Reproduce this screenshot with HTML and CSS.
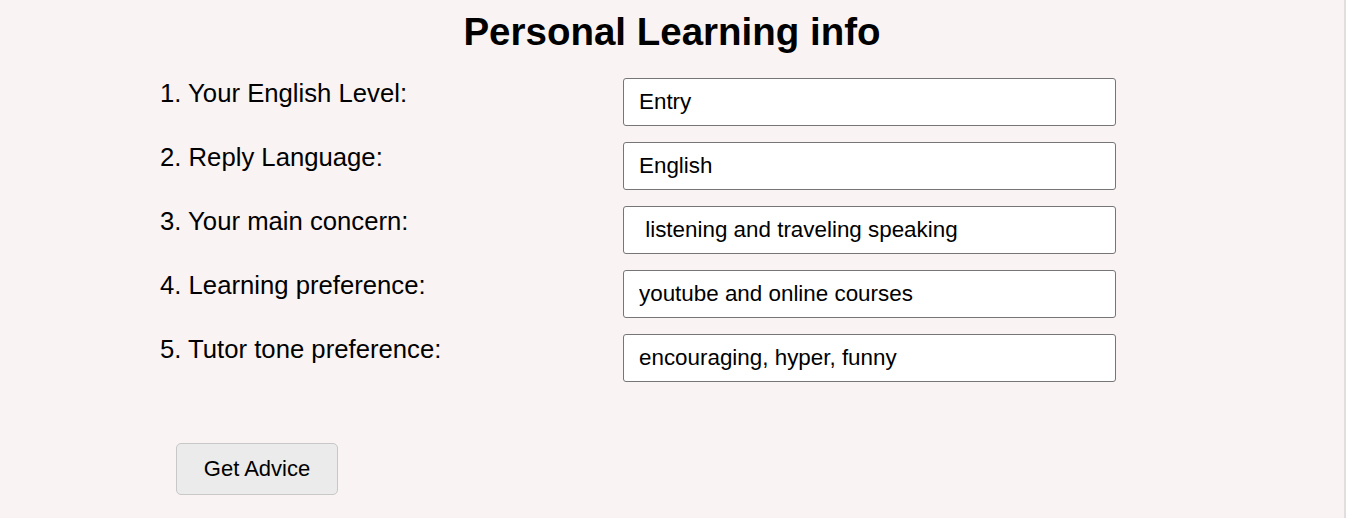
FILE: index.html
```html
<!DOCTYPE html>
<html lang="en">
<head>
<meta charset="utf-8">
<title>Personal Learning info</title>
<link rel="stylesheet" href="styles.css">
</head>
<body>
<div class="page">
  <h1 class="title">Personal Learning info</h1>
  <form class="form">
    <div class="rows">
      <label class="label" for="f1">1. Your English Level:</label>
      <input class="field" id="f1" type="text" value="Entry">
      <label class="label" for="f2">2. Reply Language:</label>
      <input class="field" id="f2" type="text" value="English">
      <label class="label" for="f3">3. Your main concern:</label>
      <input class="field" id="f3" type="text" value=" listening and traveling speaking">
      <label class="label" for="f4">4. Learning preference:</label>
      <input class="field" id="f4" type="text" value="youtube and online courses">
      <label class="label" for="f5">5. Tutor tone preference:</label>
      <input class="field" id="f5" type="text" value="encouraging, hyper, funny">
    </div>
    <div class="actions">
      <button class="btn" type="button">Get Advice</button>
    </div>
  </form>
</div>
</body>
</html>
```

FILE: styles.css
```css
html, body {
  margin: 0;
  padding: 0;
  background: #f9f3f3;
}
body {
  font-family: "Liberation Sans", Arial, Helvetica, sans-serif;
  color: #000;
}
.page {
  width: 1344px;
  min-height: 518px;
  border-right: 2px solid #e2dede;
  box-sizing: content-box;
  padding-top: 11px;
}
.title {
  margin: 0;
  font-size: 38.5px;
  font-weight: bold;
  text-align: center;
  line-height: 42px;
}
.form {
  width: 1024px;
  margin: 25px auto 0;
}
.rows {
  display: grid;
  grid-template-columns: 463px 493px;
  row-gap: 16px;
  align-items: start;
}
.label {
  font-size: 25.7px;
  line-height: 29px;
  padding-top: 1px;
}
.field {
  box-sizing: border-box;
  width: 493px;
  height: 48px;
  margin: 0;
  padding: 0 15px;
  font-family: "Liberation Sans", Arial, Helvetica, sans-serif;
  font-size: 22.4px;
  color: #000;
  background: #fff;
  border: 1px solid #767676;
  border-radius: 3px;
  outline: none;
}
.actions {
  display: flex;
  padding: 61px 0 0 16px;
}
.btn {
  box-sizing: border-box;
  width: 162px;
  height: 52px;
  font-family: "Liberation Sans", Arial, Helvetica, sans-serif;
  font-size: 22px;
  color: #000;
  background: #ebebeb;
  border: 1px solid #c8c8c8;
  border-radius: 5px;
  padding: 0;
}
```
